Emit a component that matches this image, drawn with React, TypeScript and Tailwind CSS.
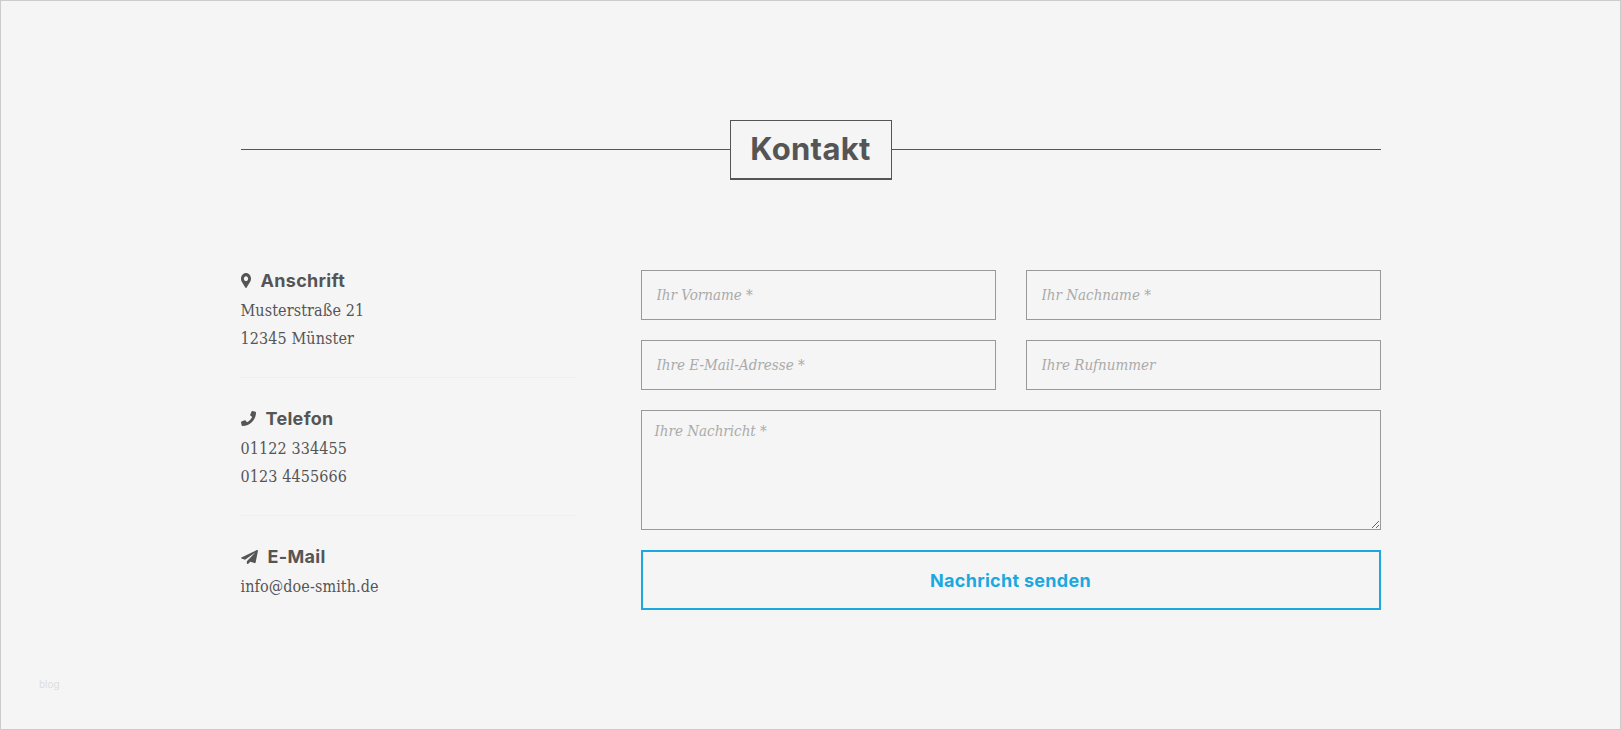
import React from 'react';
import { FaMapMarkerAlt, FaPhone, FaPaperPlane } from 'react-icons/fa';

const serif = "font-['DejaVu_Serif_Condensed','Liberation_Serif',serif]";

const fieldClass =
  `h-[50px] w-full border border-[#999] bg-transparent px-[15px] ${serif} text-[15px] italic text-[#555] outline-none placeholder:text-[#aaa]`;

function InfoBlock({ icon, title, lines, divider }: { icon: React.ReactNode; title: string; lines: string[]; divider?: boolean }) {
  return (
    <div className={divider ? "mb-[25px] border-b border-[#eeeeee] pb-[24px]" : ""}>
      <h3 className="flex h-[31px] items-center font-['Inter',sans-serif] text-[18px] font-bold tracking-[0.3px] text-[#555]">
        {icon}
        {title}
      </h3>
      <div className="pt-px">
        {lines.map((line) => (
          <p key={line} className={`h-[28px] ${serif} text-[16px] leading-[28px] tracking-[0.1px] text-[#555]`}>
            {line}
          </p>
        ))}
      </div>
    </div>
  );
}

export default function App() {
  return (
    <div className="flex h-[730px] w-full flex-col overflow-hidden border border-[#ccc] bg-[#f5f5f5]">
      <div className="mx-auto w-[1140px] pt-[119px]">
        <div className="flex items-center">
          <div className="mb-[2px] h-px flex-1 bg-[#555]" />
          <h2 className="flex h-[60px] w-[162px] items-center justify-center border border-b-2 border-[#555] font-['Inter',sans-serif] text-[31px] font-bold tracking-[0.3px] text-[#555]">
            Kontakt
          </h2>
          <div className="mb-[2px] h-px flex-1 bg-[#555]" />
        </div>

        <div className="mt-[90px] flex gap-[66px]">
          <div className="-mt-[5px] w-[334px]">
            <InfoBlock
              icon={<FaMapMarkerAlt className="mr-[10px] h-[15px] w-[10px]" preserveAspectRatio="none" />}
              title="Anschrift"
              lines={["Musterstraße 21", "12345 Münster"]}
              divider
            />
            <InfoBlock
              icon={<FaPhone className="mr-[10px] h-[15px] w-[15px]" />}
              title="Telefon"
              lines={["01122 334455", "0123 4455666"]}
              divider
            />
            <InfoBlock
              icon={<FaPaperPlane className="mr-[10px] h-[14px] w-[17px]" preserveAspectRatio="none" />}
              title="E-Mail"
              lines={["info@doe-smith.de"]}
            />
          </div>

          <form className="flex flex-1 flex-col gap-[20px]">
            <div className="grid grid-cols-2 gap-x-[30px] gap-y-[20px]">
              <input className={fieldClass} placeholder="Ihr Vorname *" />
              <input className={fieldClass} placeholder="Ihr Nachname *" />
              <input className={fieldClass} placeholder="Ihre E-Mail-Adresse *" />
              <input className={fieldClass} placeholder="Ihre Rufnummer" />
            </div>
            <textarea
              className={`block h-[120px] w-full border border-[#999] bg-transparent px-[13px] py-[9px] ${serif} text-[15px] italic outline-none placeholder:text-[#aaa]`}
              placeholder="Ihre Nachricht *"
            />
            <button
              type="button"
              className="h-[60px] w-full border-2 border-[#1ba8e0] font-['Inter',sans-serif] text-[18px] font-bold tracking-[0.3px] text-[#1ba8e0]"
            >
              Nachricht senden
            </button>
          </form>
        </div>
      </div>
      <div className="mt-[67px] pl-[38px] font-['Inter',sans-serif] text-[10px] text-[#ddd]">blog</div>
    </div>
  );
}
